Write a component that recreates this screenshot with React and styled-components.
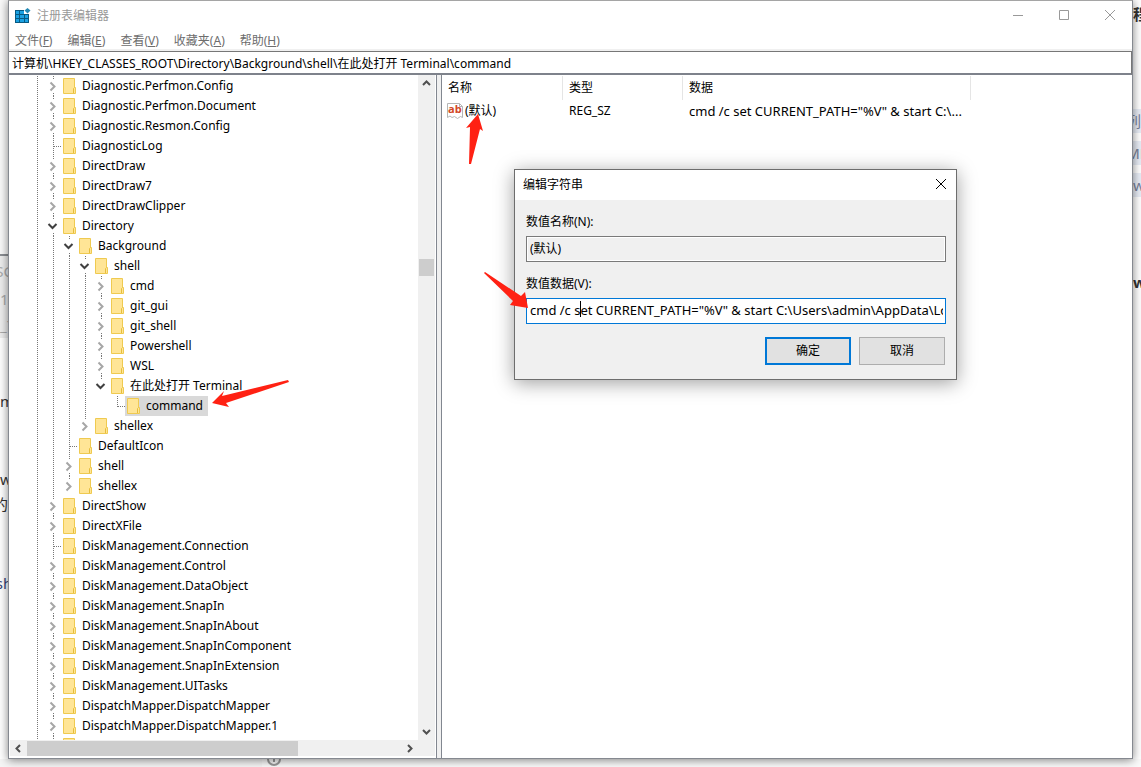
import styled, { createGlobalStyle } from "styled-components"

const GlobalStyle = createGlobalStyle`
  * {
    box-sizing: border-box;
  }
  body {
    margin: 0;
    overflow: hidden;
    background: #fff;
    color: #000;
    font-family: "Noto Sans", "Noto Sans CJK SC", sans-serif;
    font-size: 12px;
    line-height: 20px;
  }
  button, input {
    font: inherit;
    color: inherit;
  }
`

const Desktop = styled.div`
  position: relative;
  display: grid;
  grid-template-columns: 8px minmax(0, 1fr) 8px;
  grid-template-rows: minmax(0, 1fr) 8px;
  height: 100vh;
`

const Strip = styled.div`
  display: flex;
  flex-direction: column;
  overflow: hidden;
  white-space: nowrap;
`

const StripLine = styled.div`
  display: flex;
  flex-shrink: 0;
  justify-content: ${({ $align }) => $align || "flex-start"};
  align-items: center;
  height: ${({ $height }) => $height}px;
  color: ${({ $color }) => $color || "#333"};
  background: ${({ $fill }) => $fill || "transparent"};
  font-size: 15px;
  font-weight: ${({ $bold }) => ($bold ? 700 : 400)};
  border-top: ${({ $ruled }) => ($ruled ? "2px solid #8c8f94" : "none")};
`

const BottomStrip = styled.div`
  grid-column: 1 / -1;
  display: flex;
  justify-content: flex-start;
  overflow: hidden;
  background: #f5f5f5;
`

const BottomMargin = styled.div`
  width: 262px;
`

const BottomPage = styled.div`
  flex: 1;
  padding-left: 4px;
  background: #fafafa;

  svg {
    display: block;
    margin-top: -8px;
  }
`

const Window = styled.main`
  z-index: 1;
  display: flex;
  flex-direction: column;
  min-width: 0;
  min-height: 0;
  border: 1px solid #858990;
  border-top-color: #a5a5a5;
  background: #fff;
  box-shadow: 0 1px 9px rgba(0, 0, 0, 0.5);
`

const TitleBar = styled.header`
  display: flex;
  align-items: center;
  flex-shrink: 0;
  height: 29px;
  padding-left: 6px;
  color: #999;

  h1 {
    flex: 1;
    margin: 0 0 0 6px;
    font-size: 12px;
    font-weight: 400;
  }
`

const WindowButton = styled.button`
  display: flex;
  align-items: center;
  align-self: flex-start;
  justify-content: center;
  width: ${({ $width }) => $width || 46}px;
  height: 28px;
  padding: 0 0 0 2px;
  border: 0;
  background: transparent;

  svg {
    overflow: visible;
  }
`

const MenuBar = styled.nav`
  display: flex;
  flex-shrink: 0;
  gap: 15px;
  height: 21px;
  padding: 1px 0 0 6px;
  border-bottom: 2px solid #f0f0f0;
  color: #6d6d6d;
`

const MenuButton = styled.button`
  padding: 0;
  border: 0;
  background: transparent;
  line-height: 20px;
`

const AddressBar = styled.input`
  flex-shrink: 0;
  width: 100%;
  height: 24px;
  padding: 0 3px;
  border: 1px solid #777;
  border-bottom: 2px solid #7e828b;
  border-left: 0;
  background: #fff;
  outline: 0;
`

const Panes = styled.div`
  display: flex;
  flex: 1;
  min-height: 0;
  background: #f0f0f0;
`

const TreePane = styled.section`
  display: flex;
  flex-direction: column;
  width: 428px;
  flex-shrink: 0;
  padding: 0 1px 2px;
  border-right: 1px solid #828790;
  background: #fff;
`

const TreeArea = styled.div`
  display: flex;
  flex: 1;
  min-height: 0;
`

const Tree = styled.ul`
  flex: 1;
  margin: 0;
  padding: 1px 0 0 19px;
  overflow: hidden;
  list-style: none;
`

const TreeRow = styled.li`
  display: flex;
  height: 20px;
`

const Guide = styled.svg`
  flex-shrink: 0;
  width: 16px;
  height: 20px;
`

const TreeLabel = styled.span`
  display: flex;
  align-items: center;
  gap: 6px;
  height: 20px;
  padding: 0 5px 0 2px;
  background: ${({ $selected }) => ($selected ? "#d9d9d9" : "transparent")};
  white-space: nowrap;
`

const VerticalBar = styled.div`
  display: flex;
  flex-direction: column;
  align-items: center;
  justify-content: space-between;
  width: 17px;
  background: #f0f0f0;
`

const VerticalThumb = styled.div`
  width: 15px;
  height: 17px;
  margin-bottom: 280px;
  background: #cdcdcd;
`

const HorizontalBar = styled.div`
  display: flex;
  align-items: center;
  height: 16px;
  background: #f0f0f0;
`

const HorizontalThumb = styled.div`
  width: 271px;
  height: 15px;
  margin-right: auto;
  background: #cdcdcd;
`

const ScrollButton = styled.button`
  display: flex;
  align-items: center;
  justify-content: center;
  width: 17px;
  height: 17px;
  padding: 0;
  border: 0;
  background: transparent;
`

const ValuePane = styled.section`
  flex: 1;
  min-width: 0;
  margin-left: 4px;
  border-left: 1px solid #828790;
  background: #fff;
`

const ValueTable = styled.table`
  width: 529px;
  margin-top: 1px;
  border-collapse: separate;
  border-spacing: 0;
  table-layout: fixed;

  th {
    height: 24px;
    padding: 0 6px;
    border-right: 1px solid #e5e5e5;
    font-weight: 400;
    text-align: left;
  }
  td {
    height: 22px;
    padding: 0 6px;
    white-space: nowrap;
  }
  td:first-child {
    padding-left: 5px;
  }
  td:last-child {
    font-size: 13px;
  }
`

const ValueName = styled.span`
  display: flex;
  align-items: center;
  gap: 2px;
`

const Dialog = styled.div`
  position: absolute;
  z-index: 2;
  top: 169px;
  left: 514px;
  width: 443px;
  border: 1px solid #6d6d6d;
  background: #f0f0f0;
  box-shadow: 0 3px 18px rgba(0, 0, 0, 0.38);
`

const DialogTitle = styled.div`
  display: flex;
  align-items: center;
  justify-content: space-between;
  height: 30px;
  padding-left: 8px;
  background: #fff;

  h2 {
    margin: 0;
    font-size: 12px;
    font-weight: 400;
  }
`

const DialogForm = styled.form`
  display: flex;
  flex-direction: column;
  padding: 12px 10px 14px 11px;
`

const Field = styled.div`
  display: flex;
  flex-direction: column;
  gap: 4px;
  margin-bottom: 12px;
`

const TextBox = styled.input`
  width: 100%;
  height: 26px;
  padding: 0 2px 3px 3px;
  border: 1px solid ${({ $active }) => ($active ? "#0078d7" : "#7a7a7a")};
  outline: 0;
  background: ${({ $active }) => ($active ? "#fff" : "#f0f0f0")};
  box-shadow: inset 0 0 0 1px #fff;
  font-size: ${({ $active }) => ($active ? 13 : 12)}px;
`

const InputWrap = styled.div`
  position: relative;
  height: 26px;
`

const Caret = styled.span`
  position: absolute;
  top: 3px;
  left: 54px;
  width: 1px;
  height: 16px;
  background: #000;
`

const DialogActions = styled.div`
  display: flex;
  justify-content: flex-end;
  gap: 8px;
  margin: 1px 1px 0 0;
`

const PushButton = styled.button`
  width: 86px;
  height: 28px;
  padding: 0;
  border: ${({ $primary }) => ($primary ? "2px solid #0078d7" : "1px solid #adadad")};
  background: #e1e1e1;
`

const Marks = styled.svg`
  position: absolute;
  z-index: 3;
  top: 0;
  left: 0;
  pointer-events: none;
`

const menus = [
  ["文件", "F"],
  ["编辑", "E"],
  ["查看", "V"],
  ["收藏夹", "A"],
  ["帮助", "H"],
]

// level, name, state: c = closed, o = open, - = no children
const keys = [
  [1, "Diagnostic.Perfmon.Config", "c"],
  [1, "Diagnostic.Perfmon.Document", "c"],
  [1, "Diagnostic.Resmon.Config", "c"],
  [1, "DiagnosticLog", "-"],
  [1, "DirectDraw", "c"],
  [1, "DirectDraw7", "c"],
  [1, "DirectDrawClipper", "c"],
  [1, "Directory", "o"],
  [2, "Background", "o"],
  [3, "shell", "o"],
  [4, "cmd", "c"],
  [4, "git_gui", "c"],
  [4, "git_shell", "c"],
  [4, "Powershell", "c"],
  [4, "WSL", "c"],
  [4, "在此处打开 Terminal", "o"],
  [5, "command", "-"],
  [3, "shellex", "c"],
  [2, "DefaultIcon", "-"],
  [2, "shell", "c"],
  [2, "shellex", "c"],
  [1, "DirectShow", "c"],
  [1, "DirectXFile", "c"],
  [1, "DiskManagement.Connection", "-"],
  [1, "DiskManagement.Control", "c"],
  [1, "DiskManagement.DataObject", "c"],
  [1, "DiskManagement.SnapIn", "c"],
  [1, "DiskManagement.SnapInAbout", "c"],
  [1, "DiskManagement.SnapInComponent", "c"],
  [1, "DiskManagement.SnapInExtension", "c"],
  [1, "DiskManagement.UITasks", "c"],
  [1, "DispatchMapper.DispatchMapper", "c"],
  [1, "DispatchMapper.DispatchMapper.1", "c"],
  [1, "", "c"],
]

// a level goes on below a row if a sibling comes before any shallower key
const continues = (index, level) => {
  const next = keys.slice(index + 1).find(([other]) => other <= level)
  return level < 1 || !next ? true : next[0] === level
}

const Dots = ({ d }) => (
  <path d={d} stroke="#777" strokeDasharray="1 1" fill="none" />
)

const Folder = () => (
  <svg width="13" height="16" viewBox="0 0 13 16">
    <path d="M.5 .5H11.5V9.5H12.5V15.5H.5Z" fill="#ffe596" stroke="#efca50" />
    <path d="M10.5 15V10.5L11.5 9.5" fill="none" stroke="#e6bd3c" />
  </svg>
)

const Branch = ({ index, level, state }) => {
  const goesOn = continues(index, level)
  return (
    <Guide viewBox="0 0 16 20">
      {state === "-" && (
        <>
          <Dots d={goesOn ? "M8.5 0V20" : "M8.5 0V11"} />
          <Dots d="M9 10.5H16" />
        </>
      )}
      {state !== "-" && <Dots d="M8.5 0V3" />}
      {state !== "-" && goesOn && <Dots d="M8.5 17V20" />}
      {state === "c" && (
        <path d="M5.5 6.5L9.5 10.5L5.5 14.5" fill="none" stroke="#a6a6a6" strokeWidth="2" />
      )}
      {state === "o" && (
        <path d="M3.5 8L7.5 12L11.5 8" fill="none" stroke="#404040" strokeWidth="2" />
      )}
    </Guide>
  )
}

const KeyRow = ({ index, level, name, state }) => (
  <TreeRow>
    {Array.from({ length: level }, (_, depth) => (
      <Guide key={depth} viewBox="0 0 16 20">
        {continues(index, depth) && <Dots d="M8.5 0V20" />}
      </Guide>
    ))}
    <Branch index={index} level={level} state={state} />
    <TreeLabel $selected={name === "command"}>
      <Folder />
      {name}
    </TreeLabel>
  </TreeRow>
)

const arrows = {
  up: "M1 6L4.5 2.5L8 6",
  down: "M1 3L4.5 6.5L8 3",
  left: "M6 1L2.5 4.5L6 8",
  right: "M3 1L6.5 4.5L3 8",
}

const ScrollArrow = ({ direction }) => (
  <ScrollButton type="button" aria-label={direction}>
    <svg width="9" height="9" viewBox="0 0 9 9">
      <path d={arrows[direction]} fill="none" stroke="#505050" strokeWidth="2" />
    </svg>
  </ScrollButton>
)

const RegeditIcon = () => (
  <svg width="16" height="16" viewBox="0 0 16 16">
    <path d="M0 2H9V6H14V15H0Z" fill="#075a83" />
    <g fill="#1ba1e2">
      <rect x="1" y="3" width="3" height="3" />
      <rect x="5" y="3" width="4" height="3" />
      <rect x="1" y="7" width="3" height="3" />
      <rect x="5" y="7" width="4" height="3" />
      <rect x="10" y="7" width="3" height="3" />
      <rect x="1" y="11" width="3" height="3" />
      <rect x="5" y="11" width="4" height="3" />
      <rect x="10" y="11" width="3" height="3" />
    </g>
    <path d="M12.5 0L15.5 2.5L12.5 5.5L9.5 2.5Z" fill="#2389b5" />
  </svg>
)

const StringIcon = () => (
  <svg width="16" height="16" viewBox="0 0 16 16">
    <path d="M.5 .5H12.5L15.5 3.5V14.5L13.5 13.5L10.5 15.5L7.5 13.5L5 14.5L3 13L.5 14.5Z" fill="#fff" stroke="#b5b5b5" />
    <path d="M12.5 .5V3.5H15.5" fill="none" stroke="#b5b5b5" />
    <text x="1" y="10" fill="#d24726" fontFamily="Open Sans" fontSize="11" fontWeight="700">ab</text>
  </svg>
)

const CloseIcon = ({ color }) => (
  <svg width="10" height="10" viewBox="0 0 10 10">
    <path d="M0 0L10 10M10 0L0 10" stroke={color} />
  </svg>
)

export default function App() {
  return (
    <>
      <GlobalStyle />
      <Desktop>
        <Strip>
          <StripLine $height={254} $fill="#fafafa" />
          <StripLine $height={31} $ruled $fill="#eee" $color="#aaa" $align="center">SC</StripLine>
          <StripLine $height={27} $fill="#eee" $color="#aaa">10</StripLine>
          <StripLine $height={26} $fill="#eee" $color="#aaa">_7</StripLine>
          <StripLine $height={50} />
          <StripLine $height={26}>m</StripLine>
          <StripLine $height={53} />
          <StripLine $height={24}>w</StripLine>
          <StripLine $height={26} $align="flex-end">的</StripLine>
          <StripLine $height={53} />
          <StripLine $height={26} $align="center" $color="#347">sh</StripLine>
        </Strip>
        <Window>
          <TitleBar>
            <RegeditIcon />
            <h1>注册表编辑器</h1>
            <WindowButton type="button" aria-label="最小化">
              <svg width="10" height="10" viewBox="0 0 10 10">
                <path d="M0 5.5H10" stroke="#999" />
              </svg>
            </WindowButton>
            <WindowButton type="button" aria-label="最大化">
              <svg width="10" height="10" viewBox="0 0 10 10">
                <path d="M.5 .5H9.5V9.5H.5Z" fill="none" stroke="#999" />
              </svg>
            </WindowButton>
            <WindowButton type="button" aria-label="关闭">
              <CloseIcon color="#999" />
            </WindowButton>
          </TitleBar>
          <MenuBar>
            {menus.map(([name, letter]) => (
              <MenuButton type="button" key={letter}>
                {name}(<u>{letter}</u>)
              </MenuButton>
            ))}
          </MenuBar>
          <AddressBar
            aria-label="地址"
            defaultValue="计算机\HKEY_CLASSES_ROOT\Directory\Background\shell\在此处打开 Terminal\command"
          />
          <Panes>
            <TreePane>
              <TreeArea>
                <Tree>
                  {keys.map(([level, name, state], index) => (
                    <KeyRow key={index} index={index} level={level} name={name} state={state} />
                  ))}
                </Tree>
                <VerticalBar>
                  <ScrollArrow direction="up" />
                  <VerticalThumb />
                  <ScrollArrow direction="down" />
                </VerticalBar>
              </TreeArea>
              <HorizontalBar>
                <ScrollArrow direction="left" />
                <HorizontalThumb />
                <ScrollArrow direction="right" />
                <VerticalBar />
              </HorizontalBar>
            </TreePane>
            <ValuePane>
              <ValueTable>
                <colgroup>
                  <col width="121" />
                  <col width="120" />
                  <col width="288" />
                </colgroup>
                <thead>
                  <tr>
                    <th>名称</th>
                    <th>类型</th>
                    <th>数据</th>
                  </tr>
                </thead>
                <tbody>
                  <tr>
                    <td>
                      <ValueName>
                        <StringIcon />
                        (默认)
                      </ValueName>
                    </td>
                    <td>REG_SZ</td>
                    <td>cmd /c set CURRENT_PATH="%V" &amp; start C:\...</td>
                  </tr>
                </tbody>
              </ValueTable>
            </ValuePane>
          </Panes>
        </Window>
        <Strip>
          <StripLine $height={27} $bold>程</StripLine>
          <StripLine $height={82} />
          <StripLine $height={24} $fill="#e8edf6" $color="#77829b" $align="flex-end">列</StripLine>
          <StripLine $height={8} />
          <StripLine $height={24} $fill="#e8edf6" $color="#77829b" $align="center">ML</StripLine>
          <StripLine $height={8} />
          <StripLine $height={24} $fill="#e8edf6" $color="#77829b">w</StripLine>
          <StripLine $height={73} />
          <StripLine $height={24} $bold>w</StripLine>
        </Strip>
        <BottomStrip>
          <BottomMargin />
          <BottomPage>
            <svg width="16" height="16" viewBox="0 0 16 16">
              <circle cx="8" cy="8" r="6" fill="none" stroke="#999" strokeWidth="2" />
              <path d="M8 6V11" stroke="#999" strokeWidth="2" />
            </svg>
          </BottomPage>
        </BottomStrip>
        <Dialog role="dialog" aria-labelledby="dialog-title">
          <DialogTitle>
            <h2 id="dialog-title">编辑字符串</h2>
            <WindowButton type="button" aria-label="关闭" $width={32}>
              <CloseIcon color="#000" />
            </WindowButton>
          </DialogTitle>
          <DialogForm>
            <Field>
              <label htmlFor="value-name">数值名称(N):</label>
              <TextBox id="value-name" readOnly value="(默认)" />
            </Field>
            <Field>
              <label htmlFor="value-data">数值数据(V):</label>
              <InputWrap>
                <TextBox
                  id="value-data"
                  $active
                  defaultValue={'cmd /c set CURRENT_PATH="%V" & start C:\\Users\\admin\\AppData\\Loc'}
                />
                <Caret />
              </InputWrap>
            </Field>
            <DialogActions>
              <PushButton type="button" $primary>确定</PushButton>
              <PushButton type="button">取消</PushButton>
            </DialogActions>
          </DialogForm>
        </Dialog>
        <Marks width="960" height="420" viewBox="0 0 960 420" fill="#ff2113">
          <path d="M478 114L483 131L480 129L471 164L469 164L470 127L466 128Z" />
          <path d="M528 308L510 305L513 301L484 273L485 272L521 296L525 292Z" />
          <path d="M212 403L224 391L222 396L288 380L289 382L226 403L229 407Z" />
        </Marks>
      </Desktop>
    </>
  )
}
